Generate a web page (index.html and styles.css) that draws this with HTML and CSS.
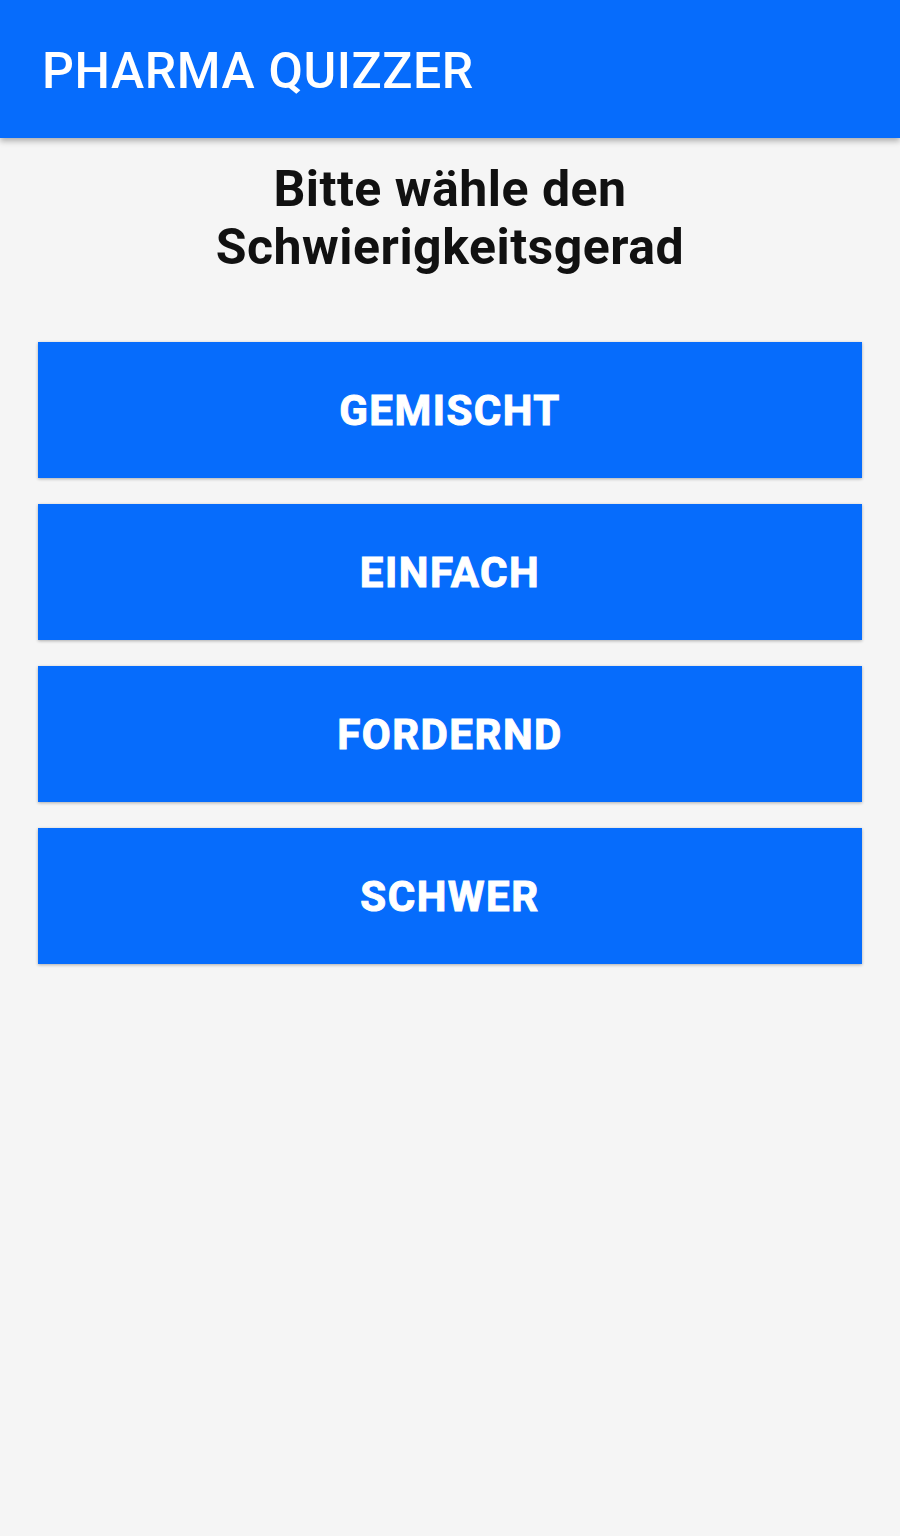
FILE: index.html
```html
<!DOCTYPE html>
<html lang="de">
<head>
    <meta charset="UTF-8">
    <meta name="viewport" content="width=device-width, initial-scale=1.0">
    <title>Pharma Quizzer</title>
    <link rel="stylesheet" href="styles.css">
</head>
<body>

    <div class="toolbar">
        <h1>PHARMA QUIZZER</h1>
    </div>

    <div class="content">
        <h2>Bitte wähle den<br>Schwierigkeitsgerad</h2>

        <div class="levels">
            <button type="button" class="button">GEMISCHT</button>
            <button type="button" class="button">EINFACH</button>
            <button type="button" class="button">FORDERND</button>
            <button type="button" class="button">SCHWER</button>
        </div>
    </div>

</body>
</html>
```

FILE: styles.css
```css
body {
    font-family: Roboto, "Liberation Sans", sans-serif;
    margin: 0;
    padding: 0;
    background: #f5f5f5;
    height: 1536px;
}

.toolbar {
    background: #066cfc;
    height: 138px;
    display: flex;
    align-items: center;
    padding: 4px 42px 0 42px;
    box-sizing: border-box;
    box-shadow: 0px 3px 6px 0px rgba(0, 0, 0, 0.3);
}

.toolbar h1 {
    margin: 0;
    color: white;
    font-size: 50px;
    font-weight: 500;
    letter-spacing: 0.6px;
}

.content {
    padding: 22px 38px 0 38px;
}

h2 {
    margin: 0;
    text-align: center;
    font-size: 50px;
    font-weight: bold;
    letter-spacing: 0.5px;
    line-height: 58px;
    color: #111;
}

.levels {
    display: flex;
    flex-direction: column;
    gap: 26px;
    margin-top: 66px;
}

.button {
    background: #066cfc;
    color: white;
    height: 136px;
    border: none;
    border-radius: 0;
    font-family: Roboto, "Liberation Sans", sans-serif;
    font-size: 42px;
    font-weight: bold;
    letter-spacing: 1.5px;
    -webkit-text-stroke: 1px white;
    cursor: pointer;
    box-shadow: 0px 1px 3px 0px rgba(0, 0, 0, 0.3);
}
```
